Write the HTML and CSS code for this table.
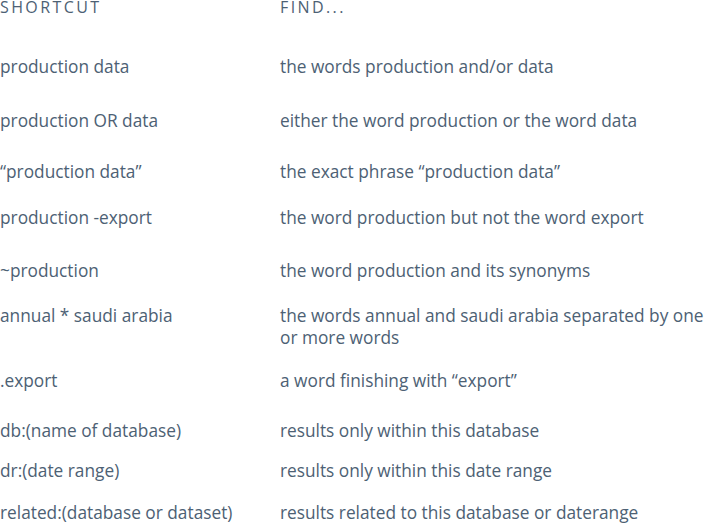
FILE: index.html
```html
<!DOCTYPE html>
<html>
<head>
<meta charset="utf-8">
<link rel="stylesheet" href="styles.css">
</head>
<body>
<div class="table">
  <div class="cell head">Shortcut</div><div class="cell head">Find...</div>
  <div class="cell">production data</div><div class="cell">the words production and/or data</div>
  <div class="cell">production OR data</div><div class="cell">either the word production or the word data</div>
  <div class="cell">“production data”</div><div class="cell">the exact phrase “production data”</div>
  <div class="cell">production -export</div><div class="cell">the word production but not the word export</div>
  <div class="cell">~production</div><div class="cell">the word production and its synonyms</div>
  <div class="cell">annual * saudi arabia</div><div class="cell">the words annual and saudi arabia separated by one or more words</div>
  <div class="cell">.export</div><div class="cell">a word finishing with “export”</div>
  <div class="cell">db:(name of database)</div><div class="cell">results only within this database</div>
  <div class="cell">dr:(date range)</div><div class="cell">results only within this date range</div>
  <div class="cell">related:(database or dataset)</div><div class="cell">results related to this database or daterange</div>
</div>
</body>
</html>
```
FILE: styles.css
```css
html, body {
  margin: 0;
  padding: 0;
  background: #ffffff;
}
body {
  font-family: "Open Sans", "Lato", sans-serif;
  font-size: 17.3px;
  line-height: 22px;
  color: #4d6174;
  width: 708px;
  overflow: hidden;
}
.table {
  display: grid;
  grid-template-columns: 280px 428px;
  grid-template-rows: 56px 54px 51px 46px 53px 45px 65px 50px 40px 42px 22px;
}
.cell {
  align-self: start;
}
.head {
  text-transform: uppercase;
  letter-spacing: 2.4px;
  font-size: 16px;
  line-height: 15px;
}
```
